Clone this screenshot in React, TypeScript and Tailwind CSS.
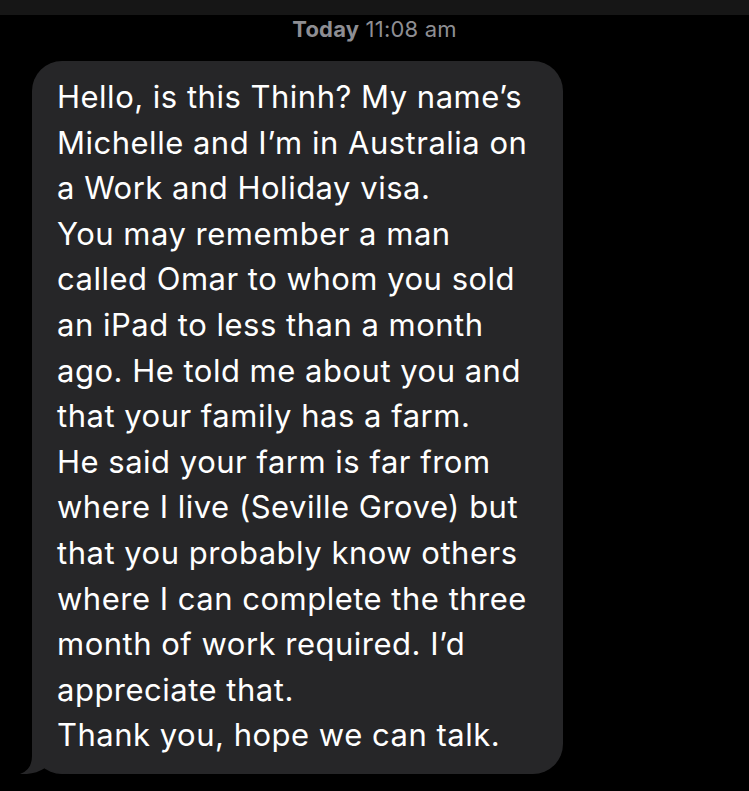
import React from "react";

const lines = [
  "Hello, is this Thinh? My name’s",
  "Michelle and I’m in Australia on",
  "a Work and Holiday visa.",
  "You may remember a man",
  "called Omar to whom you sold",
  "an iPad to less than a month",
  "ago. He told me about you and",
  "that your family has a farm.",
  "He said your farm is far from",
  "where I live (Seville Grove) but",
  "that you probably know others",
  "where I can complete the three",
  "month of work required. I’d",
  "appreciate that.",
  "Thank you, hope we can talk.",
];

export default function App() {
  return (
    <div className="w-full h-[791px] bg-black flex flex-col overflow-hidden" style={{ fontFamily: "Inter, 'Noto Sans', sans-serif" }}>
      {/* top bar */}
      <div className="h-[15px] bg-[#161616] shrink-0" />
      {/* timestamp */}
      <div className="mt-[1px] text-center text-[22px] leading-[26px] tracking-[0.2px] text-[#8e8e93]">
        <span className="font-bold">Today</span> 11:08 am
      </div>
      {/* message bubble */}
      <div className="relative mt-[19px] ml-[32px] w-[531px] bg-[#262628] rounded-[30px] pl-[25px] pt-[13px] pb-[16px]">
        {lines.map((l, i) => (
          <div key={i} className="relative z-10 text-white text-[31px] leading-[45.6px] tracking-[0.5px] whitespace-nowrap">
            {l}
          </div>
        ))}
        {/* tail */}
        <svg className="absolute left-[-12px] bottom-0" width="60" height="40" viewBox="0 0 60 40">
          <path d="M12 0 L12 22 Q12 36 0 40 Q14 41 25 34 Q33 40 50 40 L60 40 L60 0 Z" fill="#262628" />
        </svg>
      </div>
    </div>
  );
}
